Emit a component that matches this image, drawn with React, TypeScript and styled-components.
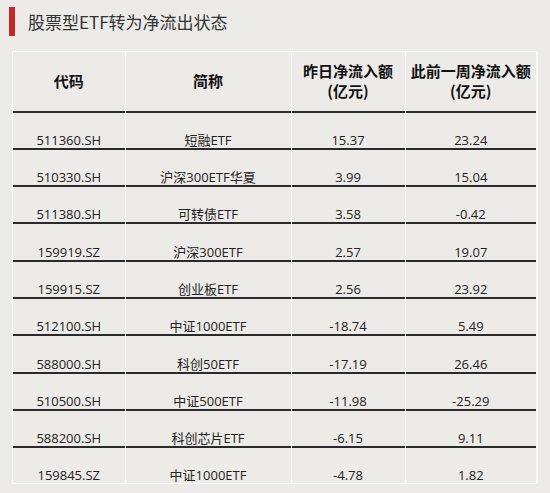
import React from "react";
import styled, { createGlobalStyle } from "styled-components";

const GlobalStyle = createGlobalStyle`
  html, body {
    margin: 0;
    padding: 0;
    background: #ecebe7;
  }
  body {
    font-family: "Open Sans", "Noto Sans CJK SC", sans-serif;
  }
`;

const Page = styled.div`
  width: 550px;
  height: 493px;
  padding-top: 7px;
  box-sizing: border-box;
  background: #ecebe7;
  overflow: hidden;
`;

const TitleRow = styled.div`
  display: flex;
  align-items: center;
  height: 29px;
  padding-left: 9px;
  gap: 13px;
`;

const RedBar = styled.div`
  width: 6px;
  height: 29px;
  background: #c3282b;
`;

const Title = styled.h1`
  margin: 0;
  font-family: "Noto Sans CJK SC", sans-serif;
  font-size: 17px;
  font-weight: 400;
  color: #333;
  line-height: 20px;
`;

const Table = styled.div`
  margin: 15px 12px 0 12px;
  display: grid;
  grid-template-columns: 111.5px 165px 113px 130.5px;
  grid-template-rows: 60.5px repeat(9, 37.3px) 35px;
  column-gap: 1px;
  background: #fbfbfa;
  border: 1.5px solid #fbfbfa;
  border-radius: 2px;
`;

const Cell = styled.div<{ $head?: boolean; $last?: boolean }>`
  box-sizing: border-box;
  background: #ecebe7;
  display: flex;
  justify-content: center;
  align-items: ${({ $head }) => ($head ? "center" : "flex-end")};
  text-align: center;
  border-bottom: ${({ $last }) => ($last ? "none" : "2px solid #2a2a2a")};
  font-size: ${({ $head }) => ($head ? "15px" : "13px")};
  font-weight: ${({ $head }) => ($head ? 700 : 400)};
  color: ${({ $head }) => ($head ? "#111" : "#222")};
  line-height: ${({ $head }) => ($head ? "20px" : "16px")};
  white-space: nowrap;
`;

const HeadText = styled.span`
  font-family: "Noto Sans CJK SC", sans-serif;
`;

const rows = [
  ["511360.SH", "短融ETF", "15.37", "23.24"],
  ["510330.SH", "沪深300ETF华夏", "3.99", "15.04"],
  ["511380.SH", "可转债ETF", "3.58", "-0.42"],
  ["159919.SZ", "沪深300ETF", "2.57", "19.07"],
  ["159915.SZ", "创业板ETF", "2.56", "23.92"],
  ["512100.SH", "中证1000ETF", "-18.74", "5.49"],
  ["588000.SH", "科创50ETF", "-17.19", "26.46"],
  ["510500.SH", "中证500ETF", "-11.98", "-25.29"],
  ["588200.SH", "科创芯片ETF", "-6.15", "9.11"],
  ["159845.SZ", "中证1000ETF", "-4.78", "1.82"],
];

const headers = [
  ["代码"],
  ["简称"],
  ["昨日净流入额", "(亿元)"],
  ["此前一周净流入额", "(亿元)"],
];

const App: React.FC = () => {
  return (
    <>
      <GlobalStyle />
      <Page>
        <TitleRow>
          <RedBar />
          <Title>股票型ETF转为净流出状态</Title>
        </TitleRow>
        <Table>
          {headers.map((h, i) => (
            <Cell $head key={`h${i}`}>
              <HeadText>
                {h.map((line, j) => (
                  <React.Fragment key={j}>
                    {j > 0 && <br />}
                    {line}
                  </React.Fragment>
                ))}
              </HeadText>
            </Cell>
          ))}
          {rows.map((r, ri) =>
            r.map((v, ci) => (
              <Cell key={`${ri}-${ci}`} $last={ri === rows.length - 1}>
                {v}
              </Cell>
            ))
          )}
        </Table>
      </Page>
    </>
  );
};

export default App;
